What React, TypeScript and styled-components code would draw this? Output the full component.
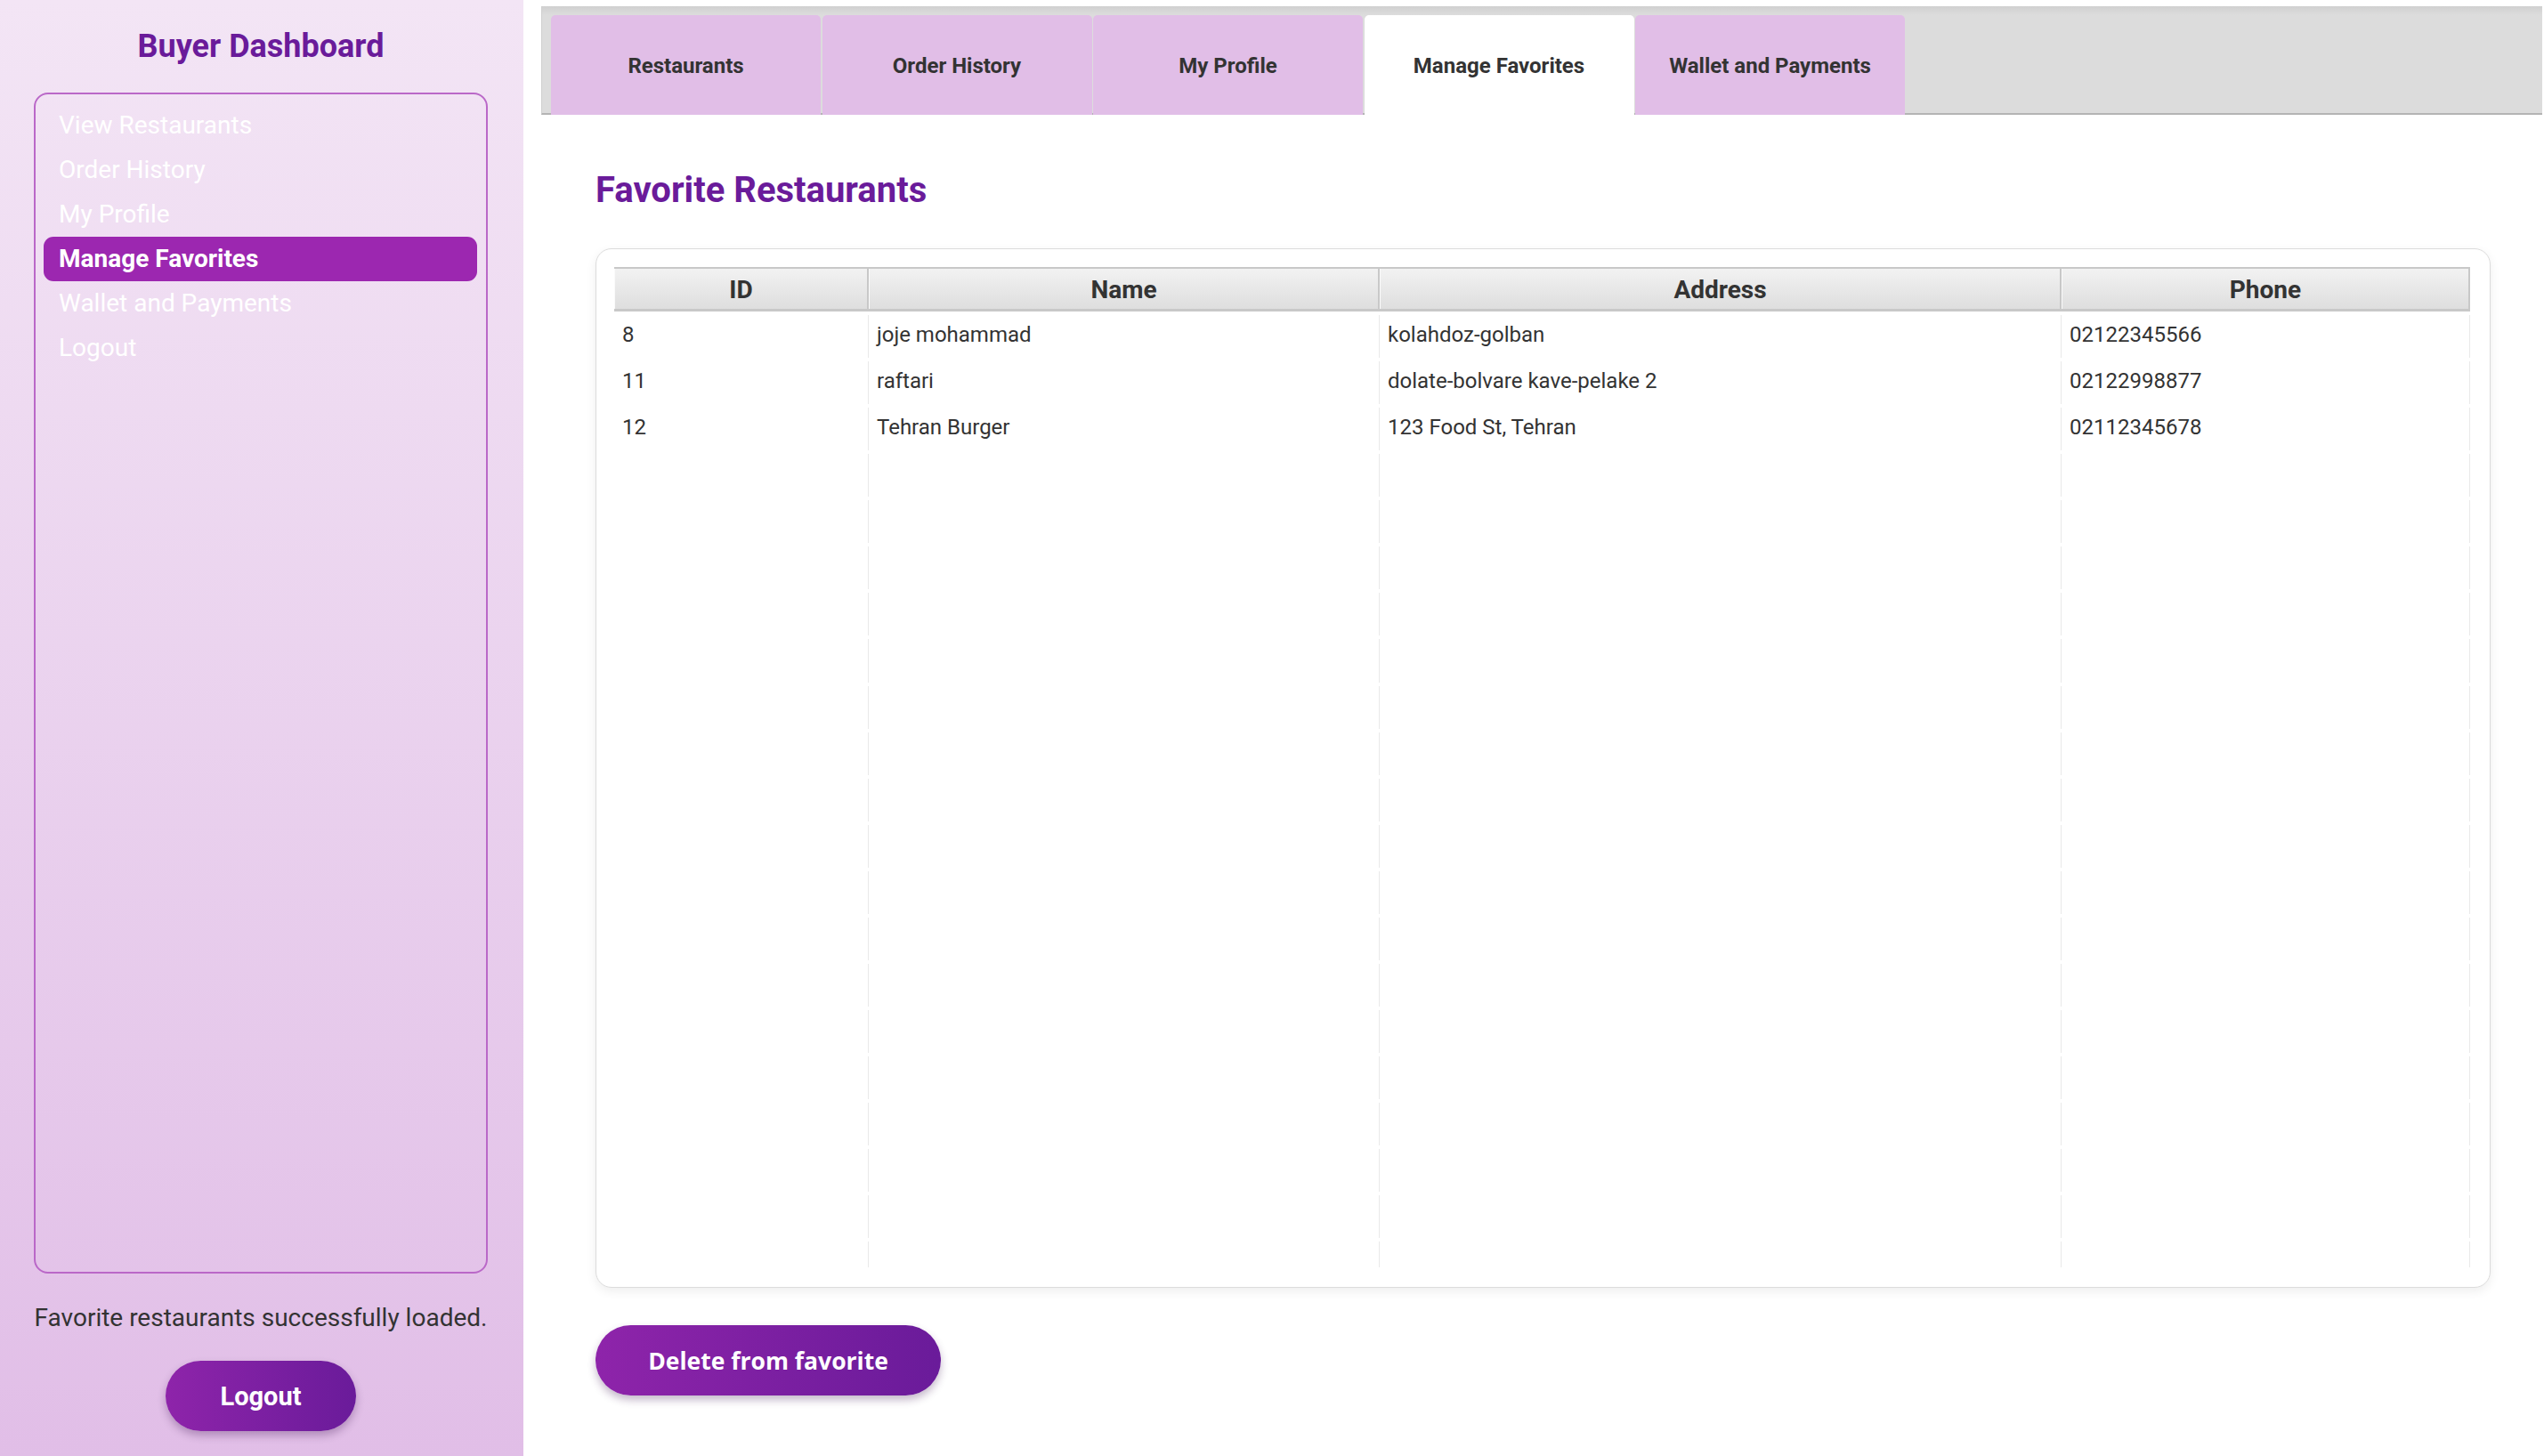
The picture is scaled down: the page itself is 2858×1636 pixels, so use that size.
import React from "react";
import styled, { createGlobalStyle } from "styled-components";

const GlobalStyle = createGlobalStyle`
  html, body { margin: 0; padding: 0; background: #ffffff; }
  body { font-family: Roboto, "Liberation Sans", sans-serif; }
  * { box-sizing: border-box; }
`;

const Page = styled.div`
  display: flex;
  width: 2858px;
  height: 1636px;
  overflow: hidden;
  background: #ffffff;
`;

const Sidebar = styled.aside`
  width: 588px;
  flex: 0 0 588px;
  height: 100%;
  display: flex;
  flex-direction: column;
  padding: 31px 40px 28px 38px;
  background: linear-gradient(180deg, #f3e5f5 0%, #e1bee7 100%);
`;

const SideTitle = styled.h1`
  margin: 0 0 31px;
  height: 42px;
  line-height: 42px;
  font-size: 36px;
  font-weight: 700;
  color: #6a1b9a;
  text-align: center;
`;

const MenuBox = styled.nav`
  flex: 1;
  display: flex;
  flex-direction: column;
  border: 2px solid #ba68c8;
  border-radius: 16px;
  padding: 10px 10px 0 9px;
`;

const MenuItem = styled.div<{ $active?: boolean }>`
  height: 50px;
  line-height: 50px;
  padding-left: 17px;
  border-radius: 11px;
  font-size: 28px;
  font-weight: ${(p) => (p.$active ? 700 : 400)};
  color: #ffffff;
  background: ${(p) => (p.$active ? "#9c27b0" : "transparent")};
  white-space: nowrap;
`;

const Status = styled.p`
  margin: 33px 0 0;
  height: 33px;
  line-height: 33px;
  font-size: 28px;
  color: #333333;
  text-align: center;
  white-space: nowrap;
`;

const PillButton = styled.button<{ $width: number }>`
  width: ${(p) => p.$width}px;
  height: 79px;
  border: none;
  border-radius: 40px;
  background: linear-gradient(90deg, #8e24aa 0%, #6a1b9a 100%);
  color: #ffffff;
  box-shadow: 0 5px 10px rgba(60, 20, 80, 0.3);
  cursor: pointer;
`;

const LogoutButton = styled(PillButton)`
  align-self: center;
  margin-top: 32px;
  font-family: Roboto, sans-serif;
  font-size: 29px;
  font-weight: 700;
`;

const Main = styled.main`
  flex: 1;
  display: flex;
  flex-direction: column;
  padding: 7px 2px 0 20px;
  min-width: 0;
`;

const TabHeader = styled.div`
  height: 122px;
  display: flex;
  align-items: flex-end;
  gap: 1.5px;
  padding-left: 10px;
  background: linear-gradient(180deg, #d0d0d0 0px, #dcdcdc 10px, #dcdcdc 100%);
  border-bottom: 2px solid #b4b4b4;
  border-left: 1px solid #cfcfcf;
`;

const Tab = styled.div<{ $active?: boolean }>`
  width: 303px;
  height: 112px;
  margin-bottom: -2px;
  display: flex;
  align-items: center;
  justify-content: center;
  padding-top: 2px;
  border-radius: 5px 5px 0 0;
  background: ${(p) => (p.$active ? "#ffffff" : "#e1bee7")};
  color: #333333;
  font-size: 24px;
  font-weight: 700;
  white-space: nowrap;
`;

const Content = styled.section`
  flex: 1;
  display: flex;
  flex-direction: column;
  align-items: flex-start;
  padding: 62px 58px 0 61px;
`;

const PageTitle = styled.h2`
  margin: 0 0 43px;
  height: 45px;
  line-height: 45px;
  font-size: 40px;
  font-weight: 700;
  color: #6a1b9a;
`;

const Card = styled.div`
  align-self: stretch;
  height: 1168px;
  padding: 20px 22px 22px 20px;
  border: 1.5px solid #dcdcdc;
  border-radius: 18px;
  background: #ffffff;
  box-shadow: 0 4px 12px rgba(0, 0, 0, 0.07);
`;

const Table = styled.div`
  height: 100%;
  overflow: hidden;
  display: flex;
  flex-direction: column;
`;

const Grid = styled.div`
  display: grid;
  grid-template-columns: 286px 574px 766px 1fr;
`;

const HeaderRow = styled(Grid)`
  height: 50px;
  flex: 0 0 50px;
  border-top: 2px solid #c8c8c8;
  border-bottom: 3px solid #c8c8c8;
`;

const HeaderCell = styled.div`
  display: flex;
  align-items: center;
  justify-content: center;
  padding-top: 1px;
  background: linear-gradient(180deg, #f2f2f2 0%, #dedede 100%);
  border-left: 1px solid #fafafa;
  border-right: 2px solid #c8c8c8;
  font-size: 28px;
  font-weight: 700;
  color: #333333;
`;

const BodyRow = styled(Grid)`
  height: 52.07px;
  flex: 0 0 52.07px;
`;

const Cell = styled.div`
  position: relative;
  display: flex;
  align-items: center;
  padding-left: 9px;
  font-size: 24px;
  color: #333333;
  white-space: nowrap;
  &::after {
    content: "";
    position: absolute;
    right: 0;
    top: 4px;
    bottom: 0;
    width: 1.5px;
    background: #e9e9e9;
  }
`;

const DeleteButton = styled(PillButton)`
  margin-top: 42px;
  font-family: "Open Sans", sans-serif;
  font-size: 26.5px;
  font-weight: 700;
`;

const menu = [
  "View Restaurants",
  "Order History",
  "My Profile",
  "Manage Favorites",
  "Wallet and Payments",
  "Logout",
];

const tabs = ["Restaurants", "Order History", "My Profile", "Manage Favorites", "Wallet and Payments"];

const rows: string[][] = [
  ["8", "joje mohammad", "kolahdoz-golban", "02122345566"],
  ["11", "raftari", "dolate-bolvare kave-pelake 2", "02122998877"],
  ["12", "Tehran Burger", "123 Food St, Tehran", "02112345678"],
];

const TOTAL_ROWS = 22;

export default function App() {
  const allRows = Array.from({ length: TOTAL_ROWS }, (_, i) => rows[i] ?? ["", "", "", ""]);
  return (
    <>
      <GlobalStyle />
      <Page>
        <Sidebar>
          <SideTitle>Buyer Dashboard</SideTitle>
          <MenuBox>
            {menu.map((m) => (
              <MenuItem key={m} $active={m === "Manage Favorites"}>
                {m}
              </MenuItem>
            ))}
          </MenuBox>
          <Status>Favorite restaurants successfully loaded.</Status>
          <LogoutButton $width={214}>Logout</LogoutButton>
        </Sidebar>
        <Main>
          <TabHeader>
            {tabs.map((t) => (
              <Tab key={t} $active={t === "Manage Favorites"}>
                {t}
              </Tab>
            ))}
          </TabHeader>
          <Content>
            <PageTitle>Favorite Restaurants</PageTitle>
            <Card>
              <Table>
                <HeaderRow>
                  <HeaderCell>ID</HeaderCell>
                  <HeaderCell>Name</HeaderCell>
                  <HeaderCell>Address</HeaderCell>
                  <HeaderCell>Phone</HeaderCell>
                </HeaderRow>
                {allRows.map((r, i) => (
                  <BodyRow key={i}>
                    {r.map((c, j) => (
                      <Cell key={j}>{c}</Cell>
                    ))}
                  </BodyRow>
                ))}
              </Table>
            </Card>
            <DeleteButton $width={388}>Delete from favorite</DeleteButton>
          </Content>
        </Main>
      </Page>
    </>
  );
}
